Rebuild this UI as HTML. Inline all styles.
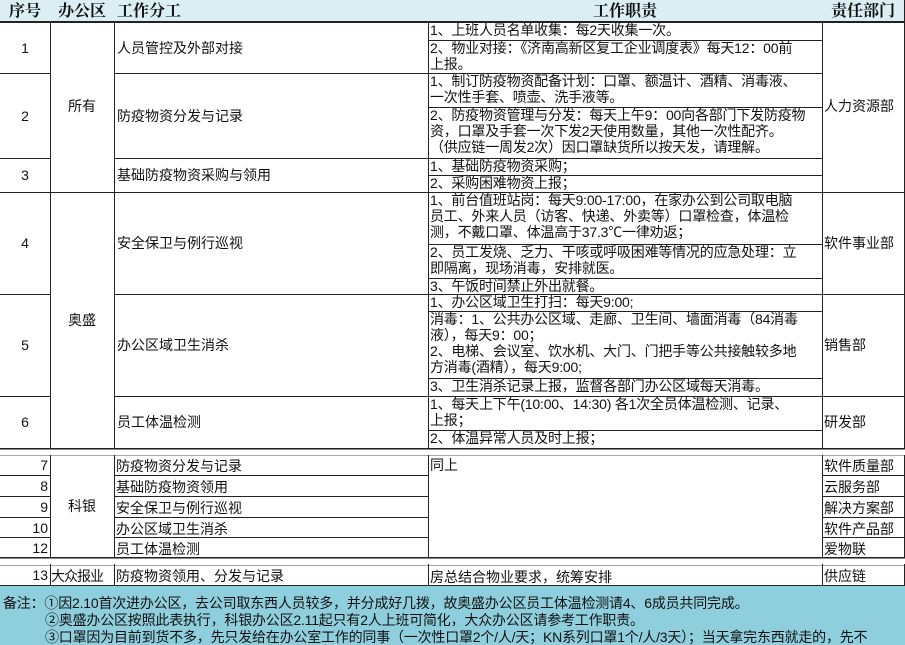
<!DOCTYPE html>
<html><head><meta charset="utf-8"><style>
body{margin:0;width:905px;height:645px;overflow:hidden;background:#fff;font-family:"Liberation Sans","Noto Sans CJK SC",sans-serif;font-size:14px;color:#111;position:relative}
.c{position:absolute;box-sizing:border-box;border-right:1px solid #222;border-bottom:1px solid #222;overflow:hidden;white-space:nowrap}
.m{display:flex;align-items:center}
.ctr{justify-content:center}
.t{padding-left:2px;line-height:16px;letter-spacing:-0.2px}
.h{font-family:"Liberation Serif","Noto Serif CJK SC",serif;font-weight:bold;font-size:16px;background:#daeef3;border-bottom:2px solid #222;padding-bottom:2px}
.g{position:absolute;left:0;width:905px;background:#fff;border-bottom:1px solid #aaa}
</style></head><body>
<div class="c m ctr h" style="left:0;top:0;width:51px;height:23px">序号</div>
<div class="c m ctr h" style="left:50px;top:0;width:65px;height:23px">办公区</div>
<div class="c m h" style="left:114px;top:0;width:315px;height:23px;padding-left:3px">工作分工</div>
<div class="c m ctr h" style="left:428px;top:0;width:395px;height:23px">工作职责</div>
<div class="c m ctr h" style="left:822px;top:0;width:83px;height:23px">责任部门</div>
<div class="c m ctr" style="left:0;top:22px;width:51px;height:52px">1</div>
<div class="c m ctr" style="left:0;top:73px;width:51px;height:86px">2</div>
<div class="c m ctr" style="left:0;top:158px;width:51px;height:35px">3</div>
<div class="c m ctr" style="left:0;top:192px;width:51px;height:103px">4</div>
<div class="c m ctr" style="left:0;top:294px;width:51px;height:103px">5</div>
<div class="c m ctr" style="left:0;top:396px;width:51px;height:53px">6</div>
<div class="c m ctr" style="left:50px;top:22px;width:65px;height:171px;padding-bottom:2px">所有</div>
<div class="c m ctr" style="left:50px;top:192px;width:65px;height:257px">奥盛</div>
<div class="c m" style="left:114px;top:22px;width:315px;height:52px;padding-left:3px">人员管控及外部对接</div>
<div class="c m" style="left:114px;top:73px;width:315px;height:86px;padding-left:3px">防疫物资分发与记录</div>
<div class="c m" style="left:114px;top:158px;width:315px;height:35px;padding-left:3px">基础防疫物资采购与领用</div>
<div class="c m" style="left:114px;top:192px;width:315px;height:103px;padding-left:3px">安全保卫与例行巡视</div>
<div class="c m" style="left:114px;top:294px;width:315px;height:103px;padding-left:3px">办公区域卫生消杀</div>
<div class="c m" style="left:114px;top:396px;width:315px;height:53px;padding-left:3px">员工体温检测</div>
<div class="c t" style="left:428px;top:22px;width:395px;height:19px">1、上班人员名单收集：每2天收集一次。</div>
<div class="c t" style="left:428px;top:40px;width:395px;height:34px">2、物业对接：《济南高新区复工企业调度表》每天12：00前<br>上报。</div>
<div class="c t" style="left:428px;top:73px;width:395px;height:35px">1、制订防疫物资配备计划：口罩、额温计、酒精、消毒液、<br>一次性手套、喷壶、洗手液等。</div>
<div class="c t" style="left:428px;top:107px;width:395px;height:52px">2、防疫物资管理与分发：每天上午9：00向各部门下发防疫物<br>资，口罩及手套一次下发2天使用数量，其他一次性配齐。<br>（供应链一周发2次）因口罩缺货所以按天发，请理解。</div>
<div class="c t" style="left:428px;top:158px;width:395px;height:18px">1、基础防疫物资采购；</div>
<div class="c t" style="left:428px;top:175px;width:395px;height:18px">2、采购困难物资上报；</div>
<div class="c t" style="left:428px;top:192px;width:395px;height:53px">1、前台值班站岗：每天9:00-17:00，在家办公到公司取电脑<br>员工、外来人员（访客、快递、外卖等）口罩检查，体温检<br>测，不戴口罩、体温高于37.3℃一律劝返；</div>
<div class="c t" style="left:428px;top:244px;width:395px;height:35px">2、员工发烧、乏力、干咳或呼吸困难等情况的应急处理：立<br>即隔离，现场消毒，安排就医。</div>
<div class="c t" style="left:428px;top:278px;width:395px;height:17px">3、午饭时间禁止外出就餐。</div>
<div class="c t" style="left:428px;top:294px;width:395px;height:18px">1、办公区域卫生打扫：每天9:00;</div>
<div class="c t" style="left:428px;top:311px;width:395px;height:68px">消毒：1、公共办公区域、走廊、卫生间、墙面消毒（84消毒<br>液），每天9：00；<br>2、电梯、会议室、饮水机、大门、门把手等公共接触较多地<br>方消毒(酒精），每天9:00;</div>
<div class="c t" style="left:428px;top:378px;width:395px;height:19px">3、卫生消杀记录上报，监督各部门办公区域每天消毒。</div>
<div class="c t" style="left:428px;top:396px;width:395px;height:35px">1、每天上下午(10:00、14:30) 各1次全员体温检测、记录、<br>上报；</div>
<div class="c t" style="left:428px;top:430px;width:395px;height:19px">2、体温异常人员及时上报；</div>
<div class="c m" style="left:822px;top:22px;width:83px;height:171px;padding-left:2px;padding-bottom:2px">人力资源部</div>
<div class="c m" style="left:822px;top:192px;width:83px;height:103px;padding-left:2px">软件事业部</div>
<div class="c m" style="left:822px;top:294px;width:83px;height:103px;padding-left:2px">销售部</div>
<div class="c m" style="left:822px;top:396px;width:83px;height:53px;padding-left:2px">研发部</div>
<div class="g" style="top:449px;height:5px;border-top:1px solid #888"></div>
<div class="c" style="left:0;top:455px;width:51px;height:21px;text-align:right;padding:2px 2px 0 0">7</div>
<div class="c" style="left:0;top:475px;width:51px;height:22px;text-align:right;padding:3px 2px 0 0">8</div>
<div class="c" style="left:0;top:496px;width:51px;height:22px;text-align:right;padding:3px 2px 0 0">9</div>
<div class="c" style="left:0;top:517px;width:51px;height:21px;text-align:right;padding:3px 2px 0 0">10</div>
<div class="c" style="left:0;top:537px;width:51px;height:21px;text-align:right;padding:3px 2px 0 0">12</div>
<div class="c m ctr" style="left:50px;top:455px;width:65px;height:103px">科银</div>
<div class="c" style="left:114px;top:455px;width:315px;height:21px;padding:1px 2px">防疫物资分发与记录</div>
<div class="c" style="left:114px;top:475px;width:315px;height:22px;padding:2px 2px">基础防疫物资领用</div>
<div class="c" style="left:114px;top:496px;width:315px;height:22px;padding:2px 2px">安全保卫与例行巡视</div>
<div class="c" style="left:114px;top:517px;width:315px;height:21px;padding:2px 2px">办公区域卫生消杀</div>
<div class="c" style="left:114px;top:537px;width:315px;height:21px;padding:2px 2px">员工体温检测</div>
<div class="c" style="left:428px;top:455px;width:395px;height:103px;padding:0 2px">同上</div>
<div class="c" style="left:822px;top:455px;width:83px;height:21px;padding:1px 2px">软件质量部</div>
<div class="c" style="left:822px;top:475px;width:83px;height:22px;padding:2px 2px">云服务部</div>
<div class="c" style="left:822px;top:496px;width:83px;height:22px;padding:2px 2px">解决方案部</div>
<div class="c" style="left:822px;top:517px;width:83px;height:21px;padding:2px 2px">软件产品部</div>
<div class="c" style="left:822px;top:537px;width:83px;height:21px;padding:2px 2px">爱物联</div>
<div class="g" style="top:558px;height:6px;border-top:1px solid #888"></div>
<div class="c" style="left:0;top:564px;width:51px;height:22px;text-align:right;padding:3px 2px 0 0">13</div>
<div class="c" style="left:50px;top:564px;width:65px;height:22px;padding:2px 0 0 1px;letter-spacing:-1px">大众报业</div>
<div class="c" style="left:114px;top:564px;width:315px;height:22px;padding:2px 2px">防疫物资领用、分发与记录</div>
<div class="c" style="left:428px;top:564px;width:395px;height:22px;padding:3px 2px">房总结合物业要求，统筹安排</div>
<div class="c" style="left:822px;top:564px;width:83px;height:22px;padding:2px 2px">供应链</div>
<div style="position:absolute;left:0;top:586px;width:905px;height:59px;background:#8fcfdd;line-height:17px;white-space:nowrap;overflow:hidden;font-size:14px;letter-spacing:-0.2px">
<div style="padding:9px 0 0 3px">备注：①因2.10首次进办公区，去公司取东西人员较多，并分成好几拨，故奥盛办公区员工体温检测请4、6成员共同完成。</div>
<div style="padding-left:45px">②奥盛办公区按照此表执行，科银办公区2.11起只有2人上班可简化，大众办公区请参考工作职责。</div>
<div style="padding-left:45px">③口罩因为目前到货不多，先只发给在办公室工作的同事（一次性口罩2个/人/天；KN系列口罩1个/人/3天）；当天拿完东西就走的，先不</div>
</div>
</body></html>
